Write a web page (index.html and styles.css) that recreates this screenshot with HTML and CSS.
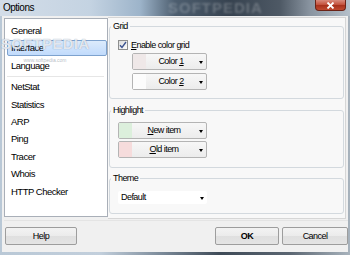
FILE: index.html
```html
<!DOCTYPE html>
<html lang="en">
  <head>
    <meta charset="UTF-8" />
    <title>Options</title>
    <link rel="stylesheet" href="styles.css">
  </head>
  <body>
    <div class="window">
      <div class="titlebar">
        <span class="title">Options</span>
        <span class="close">
          <svg width="9" height="7" viewBox="0 0 9 7"><path d="M1.5 0.5l6 6M7.5 0.5l-6 6" stroke="#fff" stroke-width="1.8" /></svg>
        </span>
      </div>

      <div class="dialog">
        <div class="main">
          <ul class="nav">
            <li>General</li>
            <li class="selected">Interface</li>
            <li>Language</li>
            <li class="sep"></li>
            <li>NetStat</li>
            <li>Statistics</li>
            <li>ARP</li>
            <li>Ping</li>
            <li>Tracer</li>
            <li>Whois</li>
            <li>HTTP Checker</li>
          </ul>

          <div class="panel">
            <fieldset class="group grid">
              <legend>Grid</legend>
              <label class="check">
                <span class="box">
                  <svg width="8" height="8" viewBox="0 0 8 8"><path d="M1 4.2l2 2.3L7 1" fill="none" stroke="#3d5490" stroke-width="1.4" /></svg>
                </span>
                <span><u>E</u>nable color grid</span>
              </label>
              <div class="combo color">
                <span class="swatch" style="background: #efe8e8"></span>
                <span class="combo-text">Color <u>1</u></span>
                <span class="arrow"></span>
              </div>
              <div class="combo color">
                <span class="swatch" style="background: #fcfcfc"></span>
                <span class="combo-text">Color <u>2</u></span>
                <span class="arrow"></span>
              </div>
            </fieldset>

            <fieldset class="group highlight">
              <legend>Highlight</legend>
              <div class="combo wide first">
                <span class="swatch" style="background: #dcefdc"></span>
                <span class="combo-text"><u>N</u>ew item</span>
                <span class="arrow"></span>
              </div>
              <div class="combo wide">
                <span class="swatch" style="background: #f6dcdc"></span>
                <span class="combo-text"><u>O</u>ld item</span>
                <span class="arrow"></span>
              </div>
            </fieldset>

            <fieldset class="group theme">
              <legend>Theme</legend>
              <div class="combo flat">
                <span class="combo-text">Default</span>
                <span class="arrow"></span>
              </div>
            </fieldset>
          </div>
        </div>

        <div class="actions">
          <button class="btn help">Help</button>
          <button class="btn ok">OK</button>
          <button class="btn cancel">Cancel</button>
        </div>
      </div>

      <div class="watermark">
        <span class="wm-big">SOFTPEDIA</span>
        <span class="wm-small">www.softpedia.com</span>
      </div>
      <span class="wm-title">SOFTPEDIA</span>
    </div>
  </body>
</html>
```

FILE: styles.css
```css
body {
  margin: 0;
  font-family: "Liberation Sans", Arial, sans-serif;
  color: #000;
}

.window {
  position: relative;
  width: 350px;
  height: 255px;
  display: flex;
  flex-direction: column;
  overflow: hidden;
  background: linear-gradient(to right, #b9c8d6 0, #c2cfdc 100px, #7d8c9b 160px, #3e4a57 220px, #5b6672 290px, #a8b3bd 350px);
}

/* title bar */
.titlebar {
  position: relative;
  height: 16px;
  display: flex;
  align-items: flex-start;
  justify-content: space-between;
  background: linear-gradient(to right, #d3dde8 0, #c4d3e2 90px, #9db4ca 140px, #4d5e6f 175px, #36424f 230px, #4e5965 280px, #8994a0 310px, #b5c0ca 350px);
}

.title {
  margin: 2px 0 0 3px;
  font-size: 10px;
  line-height: 11px;
  letter-spacing: -0.5px;
}

.close {
  width: 31px;
  height: 11px;
  margin-right: 4px;
  display: flex;
  align-items: center;
  justify-content: center;
  box-sizing: border-box;
  border: 1px solid #6b2317;
  border-top: none;
  border-radius: 0 0 4px 4px;
  background: linear-gradient(#d98a7c, #c4533e 45%, #a8311c 55%, #c0492f);
}

.close svg {
  display: block;
}

/* dialog body */
.dialog {
  flex: 1;
  margin: 0 2px 3px;
  padding: 0 0 0 2px;
  display: flex;
  flex-direction: column;
  background: #f0f0f0;
}

.main {
  height: 203px;
  display: flex;
  align-items: flex-start;
}

.nav {
  width: 104px;
  height: 199px;
  margin: 2px 0 0;
  padding: 4px 0 0;
  box-sizing: border-box;
  list-style: none;
  background: #fff;
  border: 1px solid #a9afb8;
  font-size: 9.5px;
  letter-spacing: -0.5px;
}

.nav li {
  height: 16px;
  line-height: 14px;
  margin: 0 0 1.4px 2px;
  padding-left: 3px;
  box-sizing: border-box;
  border: 1px solid transparent;
  border-radius: 2px;
}

.nav li.selected {
  border-color: #7da2ce;
  background: linear-gradient(#dcebfc, #c1dbfc);
}

.nav li.sep {
  height: 4px;
  margin: 0 3px 0 2px;
  border: none;
  position: relative;
}

.nav li.sep::after {
  content: "";
  position: absolute;
  left: 0;
  right: 0;
  top: 1px;
  border-top: 1px solid #e6e6e6;
}

.panel {
  width: 238px;
  height: 202px;
  margin-top: 1px;
  padding: 3px 0 0 1px;
  box-sizing: border-box;
  background: #f8f8f8;
  border: 1px solid #d6d6d6;
  border-left: none;
}

/* group boxes */
.group {
  width: 235px;
  min-width: 0;
  margin: 0;
  padding: 0;
  box-sizing: border-box;
  border: 1px solid #d3d9de;
  border-radius: 3px;
  font-size: 9px;
  letter-spacing: -0.55px;
}

.group legend {
  margin-left: 1px;
  padding: 0 2px;
  line-height: 10px;
}

.grid {
  height: 78px;
}

.highlight {
  height: 63px;
  margin-top: 6px;
}

.theme {
  height: 41px;
  margin-top: 5px;
}

.check {
  height: 11px;
  margin: 8px 0 0 8px;
  display: flex;
  align-items: center;
  gap: 3px;
}

.box {
  width: 10px;
  height: 10px;
  box-sizing: border-box;
  display: flex;
  align-items: center;
  justify-content: center;
  border: 1px solid #8e8f8f;
  background: linear-gradient(135deg, #dcdcdc, #fdfdfd);
}

/* combo boxes */
.combo {
  height: 17px;
  display: flex;
  align-items: stretch;
  box-sizing: border-box;
  border: 1px solid #b4b4b4;
  border-radius: 2px;
  background: linear-gradient(#f7f7f7, #ececec);
  line-height: 15px;
}

.combo.color {
  width: 75px;
  margin: 3px 0 0 22px;
}

.combo.wide {
  width: 89px;
  margin: 2px 0 0 8px;
}

.combo.wide.first {
  margin-top: 7px;
}

.combo.flat {
  width: 89px;
  height: 13px;
  margin: 8px 0 0 8px;
  border: none;
  background: #fff;
  line-height: 13px;
}

.swatch {
  width: 13px;
}

.combo-text {
  flex: 1;
  text-align: center;
}

.flat .combo-text {
  padding-left: 3px;
  text-align: left;
}

.arrow {
  width: 10px;
  position: relative;
}

.arrow::after {
  content: "";
  position: absolute;
  left: 3px;
  top: 50%;
  margin-top: -1px;
  border-left: 2.5px solid transparent;
  border-right: 2.5px solid transparent;
  border-top: 3px solid #000;
}

/* buttons */
.actions {
  margin-top: 1px;
  padding-top: 6px;
  display: flex;
  border-top: 1px solid #e4e4e4;
}

.btn {
  height: 18px;
  padding: 0;
  box-sizing: border-box;
  border: 1px solid #9d9d9d;
  border-radius: 2px;
  background: linear-gradient(#f3f3f3, #ebebeb 50%, #dfdfdf 50%, #e4e4e4);
  font-family: inherit;
  font-size: 9px;
  letter-spacing: -0.55px;
  color: #000;
}

.help {
  width: 72px;
  margin-left: 1px;
}

.ok {
  width: 64px;
  margin-left: auto;
  font-weight: bold;
}

.cancel {
  width: 66px;
  margin-left: 3px;
}

/* screenshot watermark */
.watermark {
  position: absolute;
  left: 4px;
  top: 37px;
  width: 82px;
  display: flex;
  flex-direction: column;
  align-items: center;
  pointer-events: none;
}

.wm-big {
  font-size: 15px;
  line-height: 14px;
  font-weight: bold;
  letter-spacing: 0.3px;
  color: rgba(255, 255, 255, 0.78);
  text-shadow: 0 0 1px rgba(70, 100, 140, 0.7);
}

.wm-small {
  margin-top: 7px;
  font-size: 5px;
  line-height: 5px;
  color: rgba(150, 160, 170, 0.7);
}

.wm-title {
  position: absolute;
  left: 168px;
  top: 0;
  font-size: 15px;
  line-height: 16px;
  font-weight: bold;
  letter-spacing: 1px;
  color: rgba(255, 255, 255, 0.22);
  filter: blur(1px);
}
```
